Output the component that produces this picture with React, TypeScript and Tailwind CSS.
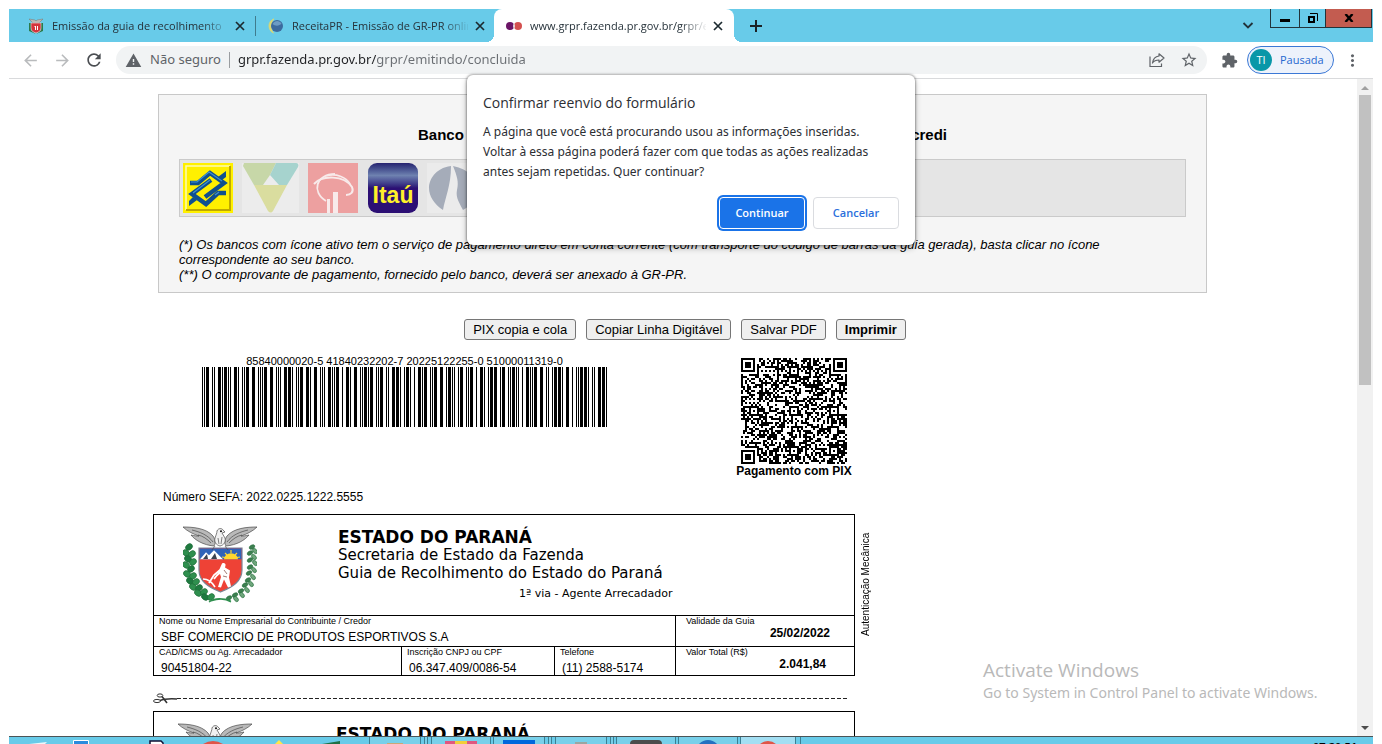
import React from "react";
import {
  MdArrowBack,
  MdArrowForward,
  MdRefresh,
  MdWarning,
  MdStarBorder,
  MdExtension,
  MdMoreVert,
} from "react-icons/md";

const UI = "font-['Open_Sans','Noto_Sans',sans-serif]";

/* Interleaved 2 of 5, narrow = 1 unit, wide = 3 units */
const ITF = ["00110", "10001", "01001", "11000", "00101", "10100", "01100", "00011", "10010", "01010"];

function itfBars(digits: string) {
  const bars: { x: number; w: number }[] = [];
  let x = 0;
  const put = (bar: number, space: number) => {
    bars.push({ x, w: bar });
    x += bar + space;
  };
  put(1, 1);
  put(1, 1);
  for (let i = 0; i < digits.length; i += 2) {
    const a = ITF[Number(digits[i])];
    const b = ITF[Number(digits[i + 1])];
    for (let k = 0; k < 5; k++) put(a[k] === "1" ? 3 : 1, b[k] === "1" ? 3 : 1);
  }
  put(3, 1);
  put(1, 0);
  return { bars, total: x };
}

function Barcode() {
  const { bars, total } = itfBars("85840000020418402322022022512225551000011319");
  return (
    <svg className="block h-[60px] w-[405px]" viewBox={`0 0 ${total} 60`} preserveAspectRatio="none" shapeRendering="crispEdges" aria-label="Código de barras">
      {bars.map((b) => (
        <rect key={b.x} x={b.x} y="0" width={b.w} height="60" />
      ))}
    </svg>
  );
}

function qrPath(n: number) {
  let seed = 20220225;
  const rand = () => {
    seed = (Math.imul(seed, 1664525) + 1013904223) >>> 0;
    return seed / 4294967296;
  };
  const finder = (r: number, c: number, r0: number, c0: number) => {
    const d = Math.max(Math.abs(r - r0 - 3), Math.abs(c - c0 - 3));
    return d > 4 ? null : d !== 2 && d !== 4;
  };
  let d = "";
  for (let r = 0; r < n; r++) {
    for (let c = 0; c < n; c++) {
      let on: boolean = rand() < 0.5;
      if (r === 6) on = c % 2 === 0;
      if (c === 6) on = r % 2 === 0;
      for (const ar of [6, 26, 46])
        for (const ac of [6, 26, 46]) {
          const k = Math.max(Math.abs(r - ar), Math.abs(c - ac));
          if (k <= 2) on = k !== 1;
        }
      for (const f of [finder(r, c, 0, 0), finder(r, c, 0, n - 7), finder(r, c, n - 7, 0)]) if (f !== null) on = f;
      if (on) d += `M${c} ${r}h1v1h-1z`;
    }
  }
  return d;
}
const QR = qrPath(53);

function Crest() {
  const leaves: [number, number][] = [
    [6, 21], [3, 27], [9, 28], [5, 33], [10, 36], [3, 39], [8, 43], [4, 48], [10, 50], [7, 55], [13, 56], [10, 61], [16, 62], [15, 67], [21, 66], [22, 71], [28, 71],
  ];
  const grains: [number, number][] = [
    [69, 21], [72, 25], [67, 27], [71, 31], [67, 34], [72, 37], [67, 41], [71, 44], [66, 47], [70, 51], [65, 54], [68, 58], [62, 59], [64, 64], [58, 65], [59, 69], [52, 69], [53, 73], [46, 72],
  ];
  return (
    <svg className="block h-[78px] w-[74px] shrink-0" viewBox="0 0 74 78">
      <g stroke="#1f6b38" strokeWidth=".6">
        {leaves.map(([x, y], i) => (
          <ellipse key={i} cx={x} cy={y} rx="3.8" ry="2.9" fill={i % 3 ? "#2f8f4e" : "#1f7a40"} transform={`rotate(${i % 2 ? 35 : -40} ${x} ${y})`} />
        ))}
        {grains.map(([x, y], i) => (
          <ellipse key={i} cx={x} cy={y} rx="3" ry="1.9" fill={i % 2 ? "#6fa67c" : "#3d7f50"} transform={`rotate(${i % 2 ? 50 : -30} ${x} ${y})`} />
        ))}
      </g>
      <path d="M26 76q8-6 22-1M48 76q-8-5-20-1" fill="none" stroke="#2f8f4e" strokeWidth="1.3" />
      <path d="M16 22h43v22c0 11-9 17-21.500 22C25 61 16 55 16 44z" fill="#ee4236" stroke="#7b8494" strokeWidth="1.200" />
      <path d="M16.600 22.600h41.800v10.600H16.600z" fill="#2f63b8" />
      <path d="M17 33.200l6-7 3 3 5-5 4 4 5 5z" fill="#fff" />
      <path d="M20 33l4-5 1 5zM28 33l4-6 2 6z" fill="#3b4350" />
      <path d="M41 33.200a7 6 0 0 1 14 0z" fill="#ffd82e" />
      <path d="M48 24v3M42 27l2 2M54 27l-2 2M39 31l3 .5M57 31l-3 .5" stroke="#ffd82e" strokeWidth="1.200" />
      <path d="M39 37.500c2-1 4 0 3.500 2l-.5 2 5 3-1 7 2 9-3 1-4-8-3 8-3-.5 3-10-1-3-4 3z" fill="#fff" />
      <path d="M37 44l-6 5-5 8M35 48l-4 5" fill="none" stroke="#fff" strokeWidth="1.800" />
      <path d="M20 53c5 0 9 3 12 8" fill="none" stroke="#fff" strokeWidth="1.600" />
      <path d="M41 44l3 4M40 50l4 1" stroke="#8c5a52" strokeWidth=".8" fill="none" />
      <g stroke="#4a4a4a" strokeWidth=".7" fill="#b9b9b9">
        <path d="M0 1c10 0 23 1 30 9 2 3 3 7 1 10C20 19 12 14 8 9c4 1 6 1 8 1C10 8 4 5 0 1z" />
        <path d="M74 1c-10 0-23 1-30 9-2 3-3 7-1 10 11-1 19-6 23-11-4 1-6 1-8 1 6-2 12-5 16-9z" />
        <path d="M32 12c1-3 2-5 2-7 1-3 5-3 6-1l2 2-3 1 3 5c1 4-1 7-5 8-4-1-6-4-5-8z" fill="#f1f1f1" />
        <path d="M32 20l-3 4M42 20l3 4" />
        <path d="M9 4c8 2 16 5 21 12M15 9c5 1 9 4 13 8M65 4c-8 2-16 5-21 12M59 9c-5 1-9 4-13 8M35 12l1 6M39 11l-1 7" fill="none" />
      </g>
      <circle cx="38" cy="5.200" r="1" fill="#111" />
    </svg>
  );
}

function Tab({ icon, title, active, divider }: { icon: React.ReactNode; title: string; active?: boolean; divider?: boolean }) {
  return (
    <div className={active ? "relative flex h-full w-60 items-center rounded-t-lg bg-white pr-2 pl-3" : divider ? "flex h-full w-[247px] items-center pl-[19px]" : "flex h-full w-[238px] items-center pr-2 pl-3"}>
      <span className="flex w-4 shrink-0 justify-center">{icon}</span>
      <a href="#tab" className="ml-2 w-[176px] shrink-0 overflow-hidden text-[11px] leading-4 whitespace-nowrap text-[#26323a] [mask-image:linear-gradient(90deg,#000_150px,transparent_178px)]">
        {title}
      </a>
      <button aria-label="Fechar guia" className="ml-1 flex size-4 shrink-0 items-center justify-center text-[#1c2a30]">
        <svg viewBox="0 0 10 10" className="size-[10px]" stroke="currentColor" strokeWidth="1.700">
          <path d="M1 1l8 8M9 1L1 9" />
        </svg>
      </button>
      {divider && <span className="ml-[7px] h-5 w-px shrink-0 bg-[#3f7c8e]" />}
      {active && (
        <>
          <span className="absolute bottom-0 -left-2 size-2 bg-[radial-gradient(circle_at_0_0,transparent_8px,#fff_8px)]" />
          <span className="absolute -right-2 bottom-0 size-2 bg-[radial-gradient(circle_at_100%_0,transparent_8px,#fff_8px)]" />
        </>
      )}
    </div>
  );
}

function TabStrip() {
  return (
    <div className="flex h-[33px] shrink-0 justify-between bg-[#68cbe9]">
      <div className="flex">
        <Tab
          divider
          title="Emissão da guia de recolhimento"
          icon={
            <svg viewBox="0 0 16 16" className="size-4">
              <path d="M1 1l6 1 1 1 1-1 6-1-4 4H5z" fill="#bdb9b6" stroke="#77756f" strokeWidth=".5" />
              <path d="M1 5h2v7l5 4 5-4V5h2v8l-7 3-7-3z" fill="#2b7a4b" />
              <path d="M3 5h10v5c0 3-2 4-5 5-3-1-5-2-5-5z" fill="#d5333c" stroke="#e8dede" strokeWidth=".6" />
              <path d="M6 8h2v4H7V9zM9 8h1v4H9z" fill="#fff" />
            </svg>
          }
        />
        <Tab
          title="ReceitaPR - Emissão de GR-PR online"
          icon={
            <svg viewBox="0 0 16 16" className="size-4">
              <path d="M6 .8C-.5 3-.8 12 5.500 15.200 2.500 11 2.500 5 6 .8z" fill="#dcd873" stroke="#dcd873" strokeWidth=".7" />
              <circle cx="9" cy="8" r="6" fill="#3c6b9e" />
              <path d="M4.500 6c2-4 7-4 9-.5-2 2.500-6 3-9 .5z" fill="#6c9cc4" />
            </svg>
          }
        />
        <Tab
          active
          title="www.grpr.fazenda.pr.gov.br/grpr/emitindo"
          icon={
            <svg viewBox="0 0 16 16" className="size-4">
              <circle cx="4" cy="8" r="4" fill="#6b1566" />
              <circle cx="12" cy="8" r="4" fill="#d4504f" />
              <path d="M8 5.500a4 4 0 0 1 0 5 4 4 0 0 1 0-5z" fill="#e9dfe3" />
            </svg>
          }
        />
        <button aria-label="Nova guia" className="ml-3 flex w-5 items-center justify-center text-[#1b2226]">
          <svg viewBox="0 0 12 12" className="size-3" stroke="currentColor" strokeWidth="2">
            <path d="M6 0v12M0 6h12" />
          </svg>
        </button>
      </div>
      <div className="flex items-start pr-px">
        <button aria-label="Pesquisar guias" className="mt-[10px] mr-4 flex size-3 items-center justify-center">
          <svg viewBox="0 0 12 12" className="size-3" fill="none" stroke="#22333b" strokeWidth="1.800">
            <path d="M1.500 4L6 8.500 10.500 4" />
          </svg>
        </button>
        <div className="flex h-[19px] border border-t-0 border-[#22333a]">
          <button aria-label="Minimizar" className="flex w-7 items-center justify-center">
            <span className="mt-1 h-[3px] w-[10px] bg-black" />
          </button>
          <button aria-label="Restaurar" className="flex w-[26px] items-center justify-center border-l border-[#22333a]">
            <svg viewBox="0 0 10 10" className="size-[10px]" fill="none" stroke="#000">
              <path d="M1 4h5v5H1z" strokeWidth="2" />
              <path d="M2 .5h7.500V8" />
            </svg>
          </button>
          <button aria-label="Fechar" className="flex w-[46px] items-center justify-center border-l border-[#22333a] bg-[#c35c50]">
            <svg viewBox="0 0 10 8" className="h-2 w-[10px]" stroke="#000" strokeWidth="2.400">
              <path d="M1.500 0l7 8M8.500 0l-7 8" />
            </svg>
          </button>
        </div>
      </div>
    </div>
  );
}

function Toolbar() {
  return (
    <div className="flex h-[37px] shrink-0 items-center border-b border-[#d9dadc] pr-[11px] pl-3 text-[#5f6368]">
      <button aria-label="Voltar" className="text-[#b9bbbd]"><MdArrowBack size={19} /></button>
      <button aria-label="Avançar" className="ml-[13px] text-[#b9bbbd]"><MdArrowForward size={19} /></button>
      <button aria-label="Recarregar" className="ml-3 text-[#4b4e52]"><MdRefresh size={20} /></button>
      <div className="ml-3 flex h-7 min-w-0 flex-1 items-center rounded-full bg-[#f1f3f4] pr-[9px] pl-[9px] font-['Noto_Sans','Open_Sans',sans-serif]">
        <MdWarning size={17} className="shrink-0" />
        <span className="ml-2 text-[13px] whitespace-nowrap">Não seguro</span>
        <span className="mx-2 h-4 w-px bg-[#9a9da0]" />
        <input
          aria-label="Endereço"
          defaultValue="grpr.fazenda.pr.gov.br/grpr/emitindo/concluida"
          className="min-w-0 flex-1 bg-[linear-gradient(90deg,#202124_138px,#6a6e73_138px)] bg-clip-text text-[13px] text-transparent outline-none"
        />
        <button aria-label="Compartilhar">
          <svg viewBox="0 0 16 16" className="size-4" fill="none" stroke="#5f6368" strokeWidth="1.200">
            <path d="M1 4.500V14.500h11.500V11.500" />
            <path d="M10 1.800L15 6l-5 4.200V8C6.500 8 4.800 9 3.500 11 4 7 6 4.500 10 4z" strokeLinejoin="round" />
          </svg>
        </button>
        <button aria-label="Favoritos" className="ml-[15px]"><MdStarBorder size={18} /></button>
      </div>
      <button aria-label="Extensões" className="ml-[14px]"><MdExtension size={17} /></button>
      <button className="ml-[9px] flex h-7 w-[87px] items-center rounded-full border border-[#3b78d6] bg-[#edf2fb] pl-[2px] text-[11px] text-[#2668d0]">
        <span className="flex size-[22px] items-center justify-center rounded-full bg-[#0997a8] text-[11px] text-white">TI</span>
        <span className="ml-2">Pausada</span>
      </button>
      <button aria-label="Menu" className="ml-[9px]"><MdMoreVert size={19} /></button>
    </div>
  );
}

function BankIcons() {
  return (
    <div className="mt-[15px] flex h-[58px] items-center border border-[#cacaca] bg-[#e5e5e5] pl-[3px]">
      <a href="#bb" aria-label="Banco do Brasil">
        <svg viewBox="0 0 50 50" className="size-[50px]">
          <path d="M0 0h50v50H0z" fill="#fff000" />
          <path d="M3 47V3h44" fill="none" stroke="#fffbb0" strokeWidth="1.500" />
          <path d="M3 47h44V3" fill="none" stroke="#bfa800" strokeWidth="2" />
          <g fill="none" stroke="#10508e" strokeWidth="4.500">
            <path d="M7 20h8L27 10l14 10L22 34" />
            <path d="M43 30h-8L23 41 9 31l19-14" />
          </g>
          <g fill="none" stroke="#3f8fd0" strokeWidth="1.200">
            <path d="M8 19h6L26 9l13 9M10 30l17-13M36 29l-4 3" />
          </g>
          <path d="M35 14l8-6v6l-4 3zM14 37l-8 6v-5l4-4z" fill="#10508e" />
        </svg>
      </a>
      <svg viewBox="0 0 57 50" className="ml-[9px] h-[50px] w-[57px]">
        <path d="M0 0h57v50H0z" fill="#ececec" />
        <path d="M2 0h32l-6 12-7 10h-9L1 3z" fill="#c7d7a8" />
        <path d="M34 0h20c2 0 3 2 2 4L45 22h-8l-9-10z" fill="#a6d3ce" />
        <path d="M12 22h33L31 48q-2 3-5 0z" fill="#dadd9f" />
      </svg>
      <svg viewBox="0 0 50 50" className="ml-[9px] size-[50px]">
        <path d="M0 0h50v50H0z" fill="#eda0a0" />
        <path d="M6 21C14 12 36 12 44 24c2 5-1 8-6 8" fill="none" stroke="#f8eaea" strokeWidth="2" />
        <path d="M27 11C8 11 3 29 18 38M18 13c10-3 20 1 24 8" fill="none" stroke="#f8eaea" strokeWidth="1.800" />
        <path d="M19 36h3v14h-3zM25 29h5v21h-5z" fill="#f8eaea" />
      </svg>
      <a href="#itau" className="ml-[10px] flex size-[50px] items-end justify-center rounded-[9px] bg-linear-to-b from-[#272270] via-[#6f82b0] via-25% to-[#2c0f74] to-50% pb-1 font-['Liberation_Sans',Arial,sans-serif] text-[23px] leading-7 font-bold text-[#fff02a]">
        Itaú
      </a>
      <svg viewBox="0 0 57 50" className="ml-[9px] h-[50px] w-[57px]">
        <path d="M0 0h57v50H0z" fill="#ebebeb" />
        <path d="M24 3C8 5 2 17 2 25s5 16 14 22c2-12 8-24 8-44z" fill="#a5acb9" />
        <path d="M26 3c16 3 24 13 24 23 0 9-6 17-14 21-6-11-7-14-6-20 2-8 0-14-4-24z" fill="#a5acb9" />
      </svg>
    </div>
  );
}

function BankPanel() {
  return (
    <section className="mr-[6px] ml-[5px] border border-[#c8c8c8] bg-[#f5f5f5] px-5 pt-[31px] pb-[10px]">
      <h2 className="mx-auto flex w-[529px] justify-between text-[15px] leading-[18px] font-bold">
        <span>Banco</span>
        <span>Sicredi</span>
      </h2>
      <BankIcons />
      <p className="mt-5 text-[13px] leading-[15px] italic">
        (*) Os bancos com ícone ativo tem o serviço de pagamento direto em conta corrente (com transporte do código de barras da guia gerada), basta clicar no ícone correspondente ao seu banco.
        <br />
        (**) O comprovante de pagamento, fornecido pelo banco, deverá ser anexado à GR-PR.
      </p>
    </section>
  );
}

function ActionButton({ children, bold }: { children: React.ReactNode; bold?: boolean }) {
  return (
    <button className={bold ? "h-[21px] rounded-[3px] border border-[#767676] bg-[#efefef] px-2 text-[13px] leading-[19px] font-bold" : "h-[21px] rounded-[3px] border border-[#767676] bg-[#efefef] px-2 text-[13px] leading-[19px]"}>
      {children}
    </button>
  );
}

function SlipHeader({ second }: { second?: boolean }) {
  return (
    <div className={second ? "flex h-[100px] pt-[11px] pl-6" : "flex h-[100px] pt-[11px] pl-[29px]"}>
      <Crest />
      <div className={second ? "ml-[84px] font-['DejaVu_Sans',Verdana,sans-serif]" : "ml-[81px] font-['DejaVu_Sans',Verdana,sans-serif]"}>
        <h3 className="mt-[2px] text-[17px] leading-[18px] font-bold">ESTADO DO PARANÁ</h3>
        <p className="text-[15px] leading-[18px]">Secretaria de Estado da Fazenda</p>
        <p className="text-[15px] leading-[18px]">Guia de Recolhimento do Estado do Paraná</p>
        <p className="mt-1 ml-[181px] text-[11px] leading-4">1ª via - Agente Arrecadador</p>
      </div>
    </div>
  );
}

function Field({ label, value, className, strong }: { label: string; value: string; className: string; strong?: boolean }) {
  return (
    <div className={className}>
      <dt className="text-[9px] leading-[10px]">{label}</dt>
      <dd className={strong ? "text-right text-[12px] leading-[14px] font-bold" : "mt-1 pl-[2px] text-[12px] leading-[14px]"}>{value}</dd>
    </div>
  );
}

function Slip() {
  return (
    <div className="flex">
      <div className="w-[702px] border border-black">
        <SlipHeader />
        <dl>
          <div className="flex h-[31px] border-t border-black">
            <Field className="w-[521px] pl-[5px]" label="Nome ou Nome Empresarial do Contribuinte / Credor" value="SBF COMERCIO DE PRODUTOS ESPORTIVOS S.A" />
            <Field className="flex-1 border-l border-black pr-6 pl-[10px]" label="Validade da Guia" value="25/02/2022" strong />
          </div>
          <div className="flex h-[29px] border-t border-black">
            <Field className="w-[247px] pl-[5px]" label="CAD/ICMS ou Ag. Arrecadador" value="90451804-22" />
            <Field className="w-[153px] border-l border-black pl-[5px]" label="Inscrição CNPJ ou CPF" value="06.347.409/0086-54" />
            <Field className="w-[121px] border-l border-black pl-[5px]" label="Telefone" value="(11) 2588-5174" />
            <Field className="flex-1 border-l border-black pr-7 pl-[10px]" label="Valor Total (R$)" value="2.041,84" strong />
          </div>
        </dl>
      </div>
      <span className="mt-5 ml-[5px] h-[102px] rotate-180 text-center text-[10px] leading-3 whitespace-nowrap [writing-mode:vertical-rl]">Autenticação Mecânica</span>
    </div>
  );
}

function CutLine() {
  return (
    <div className="mt-[17px] flex h-[11px] items-center">
      <svg viewBox="0 0 24 11" className="h-[11px] w-6 shrink-0" fill="none" stroke="#333">
        <ellipse cx="7" cy="2.500" rx="2.800" ry="1.600" />
        <ellipse cx="4" cy="8" rx="3.500" ry="1.600" />
        <path d="M9 3.500l5 6.500M7 7.500c5-2 9-2 17-1.500" strokeWidth="1.600" />
      </svg>
      <svg className="h-px w-[670px]" viewBox="0 0 670 1" preserveAspectRatio="none">
        <path d="M0 .5h670" stroke="#222" strokeDasharray="4 2" />
      </svg>
    </div>
  );
}

function Page() {
  return (
    <main className="min-w-0 flex-1 overflow-hidden px-3 pt-[15px] font-['Liberation_Sans',Arial,sans-serif] text-black">
      <div className="mx-auto max-w-[1060px]">
        <BankPanel />
        <div className="mt-[26px] flex justify-center gap-[10px] pl-1">
          <ActionButton>PIX copia e cola</ActionButton>
          <ActionButton>Copiar Linha Digitável</ActionButton>
          <ActionButton>Salvar PDF</ActionButton>
          <ActionButton bold>Imprimir</ActionButton>
        </div>
        <div className="mt-4 flex items-start pl-[49px]">
          <div>
            <p className="text-center text-[11px] leading-[11px]">85840000020-5 41840232202-7 20225122255-0 51000011319-0</p>
            <Barcode />
          </div>
          <figure className="mt-[2px] ml-[127px] flex w-[120px] flex-col items-center">
            <svg viewBox="0 0 53 53" className="block size-[106px]" shapeRendering="crispEdges" aria-label="QR Code">
              <path d={QR} />
            </svg>
            <figcaption className="text-[12px] leading-[15px] font-bold whitespace-nowrap">Pagamento com PIX</figcaption>
          </figure>
        </div>
        <p className="mt-[11px] mb-[10px] pl-[10px] text-[12px] leading-[14px]">Número SEFA: 2022.0225.1222.5555</p>
        <Slip />
        <CutLine />
        <div className="mt-[7px] w-[702px] border border-black">
          <SlipHeader second />
        </div>
      </div>
    </main>
  );
}

function Scrollbar() {
  return (
    <div className="flex w-4 shrink-0 flex-col items-center bg-[#f1f1f1]">
      <svg viewBox="0 0 16 16" className="size-4"><path d="M4 11h8L8 7z" fill="#a0a0a0" /></svg>
      <div className="h-[290px] w-3 bg-[#c1c1c1]" />
      <svg viewBox="0 0 16 16" className="mt-auto size-4"><path d="M4 6h8l-4 4z" fill="#4d4d4d" /></svg>
    </div>
  );
}

function ResubmitDialog() {
  return (
    <div role="dialog" aria-labelledby="resend-title" className="absolute top-[75px] left-1/2 w-[448px] -translate-x-1/2 rounded-md bg-white px-4 pt-[18px] pb-4 text-[#2c2e33] shadow-[0_0_2px_1px_rgba(0,0,0,0.28),0_3px_6px_rgba(0,0,0,0.3)]">
      <h1 id="resend-title" className="text-[14px] leading-5">Confirmar reenvio do formulário</h1>
      <p className="mt-[9px] font-['Noto_Sans','Open_Sans',sans-serif] text-[12px] leading-5">
        A página que você está procurando usou as informações inseridas.
        <br />
        Voltar à essa página poderá fazer com que todas as ações realizadas
        <br />
        antes sejam repetidas. Quer continuar?
      </p>
      <div className="mt-[15px] flex items-center justify-end gap-2 font-semibold">
        <button className="h-8 w-[86px] rounded-[4px] border border-white bg-[#1a73e8] text-[11px] text-white ring-2 ring-[#1a73e8]">Continuar</button>
        <button className="h-8 w-[86px] rounded-[4px] border border-[#dadce0] text-[11px] text-[#2b6fdc]">Cancelar</button>
      </div>
    </div>
  );
}

const taskEdge = "h-full border-x border-[#3b7f92] bg-[#78d0ea]";

function Taskbar() {
  return (
    <footer className="flex h-2 shrink-0 items-start overflow-hidden border-t border-[#4b5457] bg-[#68cbe9]">
      <svg viewBox="0 0 360 7" className="h-[7px] w-[360px] shrink-0">
        <path d="M20 7l18-2-2 2z" fill="#eef7fa" />
        <path d="M64.500 7V3.500h15V7" fill="#2a8bdd" stroke="#fff" />
        <path d="M141 7V4h11l2 2V7" fill="#fff" stroke="#101035" strokeWidth="1.500" />
        <path d="M194 7q10-6 20 0z" fill="#e05548" />
        <path d="M266 7l4-4 4 4z" fill="#ffe64a" />
        <path d="M313 7l18-3v3z" fill="#1e7145" />
      </svg>
      <div className={`${taskEdge} w-[52px]`}><div className="mx-auto mt-[6px] h-px w-4 bg-[#c9a878]" /></div>
      <div className={`${taskEdge} ml-[3px] w-1`} />
      <div className={`${taskEdge} ml-[3px] w-[60px]`}><div className="mx-auto mt-1 flex h-[3px] w-8 justify-center bg-[#e0577f]"><div className="h-full w-3 bg-[#f1cf3a]" /></div></div>
      <div className={`${taskEdge} ml-[2px] w-[52px]`}><div className="mx-auto mt-[3px] h-1 w-8 bg-[#0068dc]" /></div>
      <div className={`${taskEdge} ml-[3px] w-1`} />
      <div className={`${taskEdge} ml-[3px] w-[52px]`}><div className="mx-auto mt-[5px] h-[2px] w-3 bg-[#9aa6a2]" /></div>
      <div className={`${taskEdge} ml-[3px] w-1`} />
      <div className={`${taskEdge} ml-[2px] w-[60px]`}><div className="mx-auto mt-[3px] h-1 w-8 rounded-t-sm bg-[#4c4c4c]" /></div>
      <div className={`${taskEdge} ml-[2px] w-[60px]`}><div className="mx-auto mt-[3px] size-6 rounded-full bg-[#2470c0]" /></div>
      <div className="ml-[2px] h-full w-[56px] border-x border-[#3b7f92] bg-[#a3dff3]"><div className="mx-auto mt-1 size-6 rounded-full bg-[#e05548]" /></div>
      <div className="ml-1 h-full w-px bg-[#3b7f92]" />
      <time className={`${UI} mt-[2px] mr-4 ml-auto text-[11px] leading-4 font-bold text-black`}>07:20:51</time>
    </footer>
  );
}

export default function App() {
  return (
    <div className={`${UI} relative flex h-screen flex-col overflow-hidden bg-white px-[9px] pt-[9px]`}>
      <TabStrip />
      <Toolbar />
      <div className="flex min-h-0 flex-1">
        <Page />
        <Scrollbar />
      </div>
      <Taskbar />
      <ResubmitDialog />
      <div className="pointer-events-none absolute right-[59px] bottom-[41px] w-[340px] text-[#b9b9b9]">
        <p className="text-[19px] leading-[26px]">Activate Windows</p>
        <p className="font-['Noto_Sans','Open_Sans',sans-serif] text-[14px] leading-5">Go to System in Control Panel to activate Windows.</p>
      </div>
    </div>
  );
}
